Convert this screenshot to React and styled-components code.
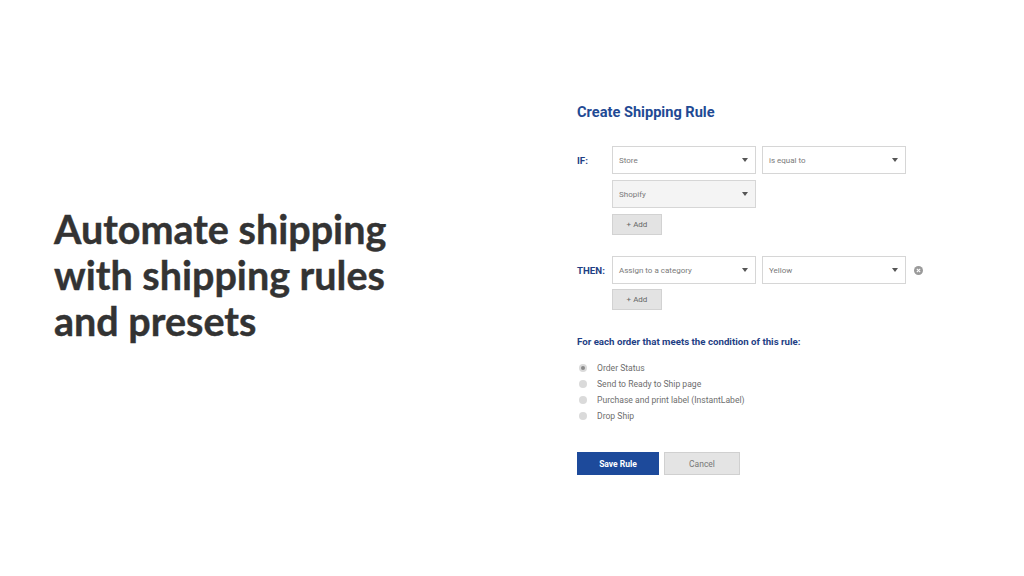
import React from 'react';
import styled, { createGlobalStyle } from 'styled-components';

const GlobalStyle = createGlobalStyle`
  html, body {
    margin: 0;
    padding: 0;
    background: #ffffff;
  }
`

const Page = styled.div`
  width: 1024px;
  height: 576px;
  display: flex;
  background: #ffffff;
  font-family: Roboto, 'Liberation Sans', sans-serif;
  overflow: hidden;
`

const Intro = styled.div`
  width: 577px;
  flex-shrink: 0;
  box-sizing: border-box;
  padding: 206px 0 0 54px;
`

const Headline = styled.h1`
  margin: 0;
  font-family: Lato, 'Liberation Sans', sans-serif;
  font-weight: 700;
  font-size: 39.5px;
  line-height: 46px;
  color: #333333;
  -webkit-text-stroke: 0.4px #333333;
`

const Panel = styled.div`
  padding-top: 104px;
  display: flex;
  flex-direction: column;
`

const Title = styled.div`
  font-size: 14.6px;
  line-height: 16px;
  font-weight: 700;
  color: #1f4a94;
  margin-bottom: 26px;
`

const RuleRow = styled.div`
  display: flex;
  align-items: flex-start;
  margin-top: ${p => p.$gap || 0}px;
`

const RowLabel = styled.div`
  width: 35px;
  height: 28px;
  line-height: 29px;
  font-size: 9.7px;
  font-weight: 700;
  color: #1f3f85;
`

const Fields = styled.div`
  display: flex;
  flex-direction: column;
  gap: ${p => p.$gap || 6}px;
`

const FieldLine = styled.div`
  display: flex;
  align-items: center;
  gap: 6px;
`

const SelectBox = styled.div`
  width: 144px;
  height: 28px;
  box-sizing: border-box;
  border: 1px solid #d6d6d6;
  background: ${p => (p.$muted ? '#f4f4f4' : '#ffffff')};
  display: flex;
  align-items: center;
  justify-content: space-between;
  padding: 0 7px 0 6px;
  font-size: 8px;
  color: #7a7a7a;
`

const Caret = styled.span`
  width: 0;
  height: 0;
  border-left: 3.5px solid transparent;
  border-right: 3.5px solid transparent;
  border-top: 4px solid #555555;
`

const AddButton = styled.button`
  width: 50px;
  height: 21px;
  box-sizing: border-box;
  border: 1px solid #d2d2d2;
  background: #e3e3e3;
  color: #666666;
  font-family: Roboto, 'Liberation Sans', sans-serif;
  font-size: 8px;
  padding: 0;
  cursor: pointer;
`

const RemoveIcon = styled.span`
  width: 9px;
  height: 9px;
  border-radius: 50%;
  background: #9a9a9a;
  margin-left: 2px;
  display: flex;
  align-items: center;
  justify-content: center;
`

const Question = styled.div`
  margin-top: 26px;
  font-size: 9.7px;
  line-height: 12px;
  font-weight: 700;
  color: #1f3f85;
`

const Options = styled.div`
  margin-top: 12px;
  display: flex;
  flex-direction: column;
`

const Option = styled.label`
  height: 16px;
  display: flex;
  align-items: center;
  font-size: 8.6px;
  color: #6e6e6e;
`

const Radio = styled.span`
  width: 8px;
  height: 8px;
  border-radius: 50%;
  background: #dadada;
  margin: 0 10px 0 2px;
  display: flex;
  align-items: center;
  justify-content: center;

  &::after {
    content: '';
    width: 4px;
    height: 4px;
    border-radius: 50%;
    background: ${p => (p.$checked ? '#8a8a8a' : 'transparent')};
  }
`

const Actions = styled.div`
  margin-top: 28px;
  display: flex;
  gap: 5px;
`

const SaveButton = styled.button`
  width: 82px;
  height: 23px;
  border: none;
  background: #1d4a9b;
  color: #ffffff;
  font-family: Roboto, 'Liberation Sans', sans-serif;
  font-weight: 700;
  font-size: 8.5px;
  padding: 0;
`

const CancelButton = styled.button`
  width: 76px;
  height: 23px;
  box-sizing: border-box;
  border: 1px solid #d0d0d0;
  background: #e4e4e4;
  color: #777777;
  font-family: Roboto, 'Liberation Sans', sans-serif;
  font-size: 8.5px;
  padding: 0;
`

const Select = ({ value, muted }) => (
    <SelectBox $muted={muted}>
        <span>{value}</span>
        <Caret />
    </SelectBox>
)

const options = [
    { label: 'Order Status', checked: true },
    { label: 'Send to Ready to Ship page' },
    { label: 'Purchase and print label (InstantLabel)' },
    { label: 'Drop Ship' },
]

const App = () => {
    return (
        <Page>
            <GlobalStyle />
            <Intro>
                <Headline>
                    Automate shipping<br />
                    with shipping rules<br />
                    and presets
                </Headline>
            </Intro>
            <Panel>
                <Title>Create Shipping Rule</Title>

                <RuleRow>
                    <RowLabel>IF:</RowLabel>
                    <Fields>
                        <FieldLine>
                            <Select value="Store" />
                            <Select value="is equal to" />
                        </FieldLine>
                        <FieldLine>
                            <Select value="Shopify" muted />
                        </FieldLine>
                        <FieldLine>
                            <AddButton>+ Add</AddButton>
                        </FieldLine>
                    </Fields>
                </RuleRow>

                <RuleRow $gap={21}>
                    <RowLabel>THEN:</RowLabel>
                    <Fields $gap={5}>
                        <FieldLine>
                            <Select value="Assign to a category" />
                            <Select value="Yellow" />
                            <RemoveIcon>
                                <svg width="5" height="5" viewBox="0 0 5 5">
                                    <path d="M0.8 0.8 L4.2 4.2 M4.2 0.8 L0.8 4.2" stroke="#ffffff" strokeWidth="1.1" />
                                </svg>
                            </RemoveIcon>
                        </FieldLine>
                        <FieldLine>
                            <AddButton>+ Add</AddButton>
                        </FieldLine>
                    </Fields>
                </RuleRow>

                <Question>For each order that meets the condition of this rule:</Question>
                <Options>
                    {options.map(o => (
                        <Option key={o.label}>
                            <Radio $checked={o.checked} />
                            {o.label}
                        </Option>
                    ))}
                </Options>

                <Actions>
                    <SaveButton>Save Rule</SaveButton>
                    <CancelButton>Cancel</CancelButton>
                </Actions>
            </Panel>
        </Page>
    )
};

export default App;
